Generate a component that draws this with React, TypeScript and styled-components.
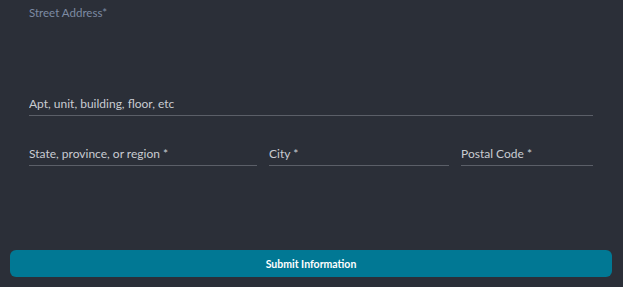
import React from "react";
import styled, { createGlobalStyle } from "styled-components";

const GlobalStyle = createGlobalStyle`
    html, body {
        margin: 0;
        padding: 0;
        background: #2b2f38;
    }
    body {
        font-family: Lato, "Liberation Sans", sans-serif;
    }
`;

const Form = styled.form`
    width: 623px;
    height: 287px;
    box-sizing: border-box;
    display: flex;
    flex-direction: column;
    padding: 6px 11px 10px 10px;
`;

const Fields = styled.div`
    flex: 1;
    display: flex;
    flex-direction: column;
    padding: 0 19px 0 19px;
`;

const TopLabel = styled.label`
    font-size: 11.5px;
    color: #7d8ba3;
    line-height: 14px;
    height: 82px;
`;

const Row = styled.div<{ columns?: string }>`
    display: grid;
    grid-template-columns: ${p => p.columns ?? "1fr"};
    column-gap: 12px;
    margin-bottom: 22px;
`;

const Input = styled.input`
    all: unset;
    box-sizing: border-box;
    width: 100%;
    height: 28px;
    padding: 7px 0 4px;
    font-family: Lato, "Liberation Sans", sans-serif;
    font-size: 12px;
    color: #d4d7dc;
    border-bottom: 1px solid #5b5f68;

    &::placeholder {
        color: #c9ccd2;
        opacity: 1;
    }
`;

const SubmitButton = styled.button`
    height: 27px;
    width: 100%;
    border: none;
    border-radius: 6px;
    background: #017894;
    color: #ffffff;
    font-family: Lato, "Liberation Sans", sans-serif;
    font-weight: 700;
    font-size: 10.5px;
    cursor: pointer;
`;

export default function App() {
    return (
        <>
            <GlobalStyle />
            <Form onSubmit={e => e.preventDefault()}>
                <Fields>
                    <TopLabel>Street Address*</TopLabel>
                    <Row>
                        <Input placeholder="Apt, unit, building, floor, etc" />
                    </Row>
                    <Row columns="228px 180px 132px">
                        <Input placeholder="State, province, or region *" />
                        <Input placeholder="City *" />
                        <Input placeholder="Postal Code *" />
                    </Row>
                </Fields>
                <SubmitButton type="submit">Submit Information</SubmitButton>
            </Form>
        </>
    );
}
